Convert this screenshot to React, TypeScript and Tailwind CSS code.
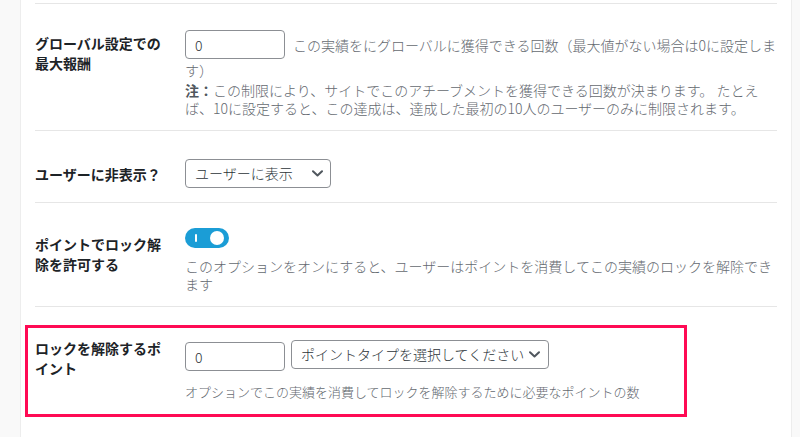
import { useState } from "react"

const Chevron = () => (
  <svg width="11" height="7" viewBox="0 0 11 7" fill="none" className="shrink-0">
    <path d="M1 1.2 5.5 5.5 10 1.2" stroke="#50575e" strokeWidth="2" strokeLinecap="round" strokeLinejoin="round" />
  </svg>
)

function FakeSelect({ label, className }: { label: string; className: string }) {
  return (
    <div
      className={`h-[29px] flex items-center justify-between rounded-[4px] border border-[#8c8f94] bg-white text-[14px] font-light text-[#2c3338] ${className}`}
    >
      <span className="whitespace-nowrap">{label}</span>
      <Chevron />
    </div>
  )
}

function NumberInput({ className = "" }: { className?: string }) {
  return (
    <input
      defaultValue="0"
      className={`h-[29px] w-[100px] rounded-[4px] border border-[#8c8f94] bg-white pl-[9px] text-[14px] font-light text-[#2c3338] outline-none ${className}`}
    />
  )
}

export default function App() {
  const [unlock, setUnlock] = useState(true)

  return (
    <div className="min-h-[437px] h-[437px] overflow-hidden bg-[#f9f9f9] font-['Noto_Sans_CJK_JP','Noto_Sans',sans-serif]">
      <div className="ml-[20px] w-[772px] h-full bg-white border-x border-[#ededed] px-[14px]">
        <div className="h-[3px]" />

        {/* 最大報酬 */}
        <div className="flex border-t border-[#e6e6e6] pt-[26px] pb-[13px]">
          <div className="w-[150px] shrink-0 pt-[3px] pr-[14px] text-[14px] leading-[20px] font-bold text-[#1d2327]">
            グローバル設定での最大報酬
          </div>
          <div className="w-[594px] text-[14px] leading-[18px] font-light text-[#646970]">
            <div>
              <NumberInput className="align-middle mr-[8px]" />
              <span className="align-middle">この実績をにグローバルに獲得できる回数（最大値がない場合は0に設定します）</span>
            </div>
            <p className="mt-[2px]">
              <b className="font-bold text-[#50575e]">注：</b>この制限により、サイトでこのアチーブメントを獲得できる回数が決まります。 たとえば、10に設定すると、この達成は、達成した最初の10人のユーザーのみに制限されます。
            </p>
          </div>
        </div>

        {/* 非表示 */}
        <div className="flex border-t border-[#e6e6e6] pt-[28px] pb-[14px]">
          <div className="w-[150px] shrink-0 pt-[5px] pr-[14px] text-[14px] leading-[20px] font-bold text-[#1d2327]">
            ユーザーに非表示？
          </div>
          <FakeSelect label="ユーザーに表示" className="w-[146px] pl-[9px] pr-[7px]" />
        </div>

        {/* ポイントでロック解除 */}
        <div className="flex border-t border-[#e6e6e6] pt-[25px] pb-[13px]">
          <div className="w-[150px] shrink-0 pt-[6px] pr-[14px] text-[14px] leading-[20px] font-bold text-[#1d2327]">
            ポイントでロック解除を許可する
          </div>
          <div className="w-[594px]">
            <button
              onClick={() => setUnlock(!unlock)}
              className={`relative flex h-[20px] w-[44px] items-center rounded-full ${unlock ? "bg-[#1b9dd6]" : "bg-[#c3c4c7]"}`}
            >
              <span className="absolute left-[10px] top-[6px] h-[8px] w-[2px] rounded-sm bg-white" />
              <span className={`absolute top-[3px] h-[14px] w-[14px] rounded-full bg-white ${unlock ? "right-[5px]" : "left-[4px]"}`} />
            </button>
            <p className="mt-[9px] text-[14px] leading-[18px] font-light text-[#646970]">
              このオプションをオンにすると、ユーザーはポイントを消費してこの実績のロックを解除できます
            </p>
          </div>
        </div>

        {/* ロックを解除するポイント */}
        <div className="border-t border-[#e6e6e6] pt-[18px]">
          <div className="-ml-[10px] w-[662px] border-[3px] border-[#ff0a54] pl-[7px] pt-[9px] pb-[13px] flex">
            <div className="w-[150px] shrink-0 pt-[1px] pr-[14px] text-[14px] leading-[20px] font-bold text-[#1d2327]">
              ロックを解除するポイント
            </div>
            <div className="pt-[3px]">
              <div className="flex items-start gap-[6px]">
                <NumberInput className="mt-[2px]" />
                <FakeSelect label="ポイントタイプを選択してください" className="w-[258px] pl-[9px] pr-[8px]" />
              </div>
              <p className="mt-[12px] text-[13px] leading-[18px] font-light text-[#646970]">
                オプションでこの実績を消費してロックを解除するために必要なポイントの数
              </p>
            </div>
          </div>
        </div>
      </div>
    </div>
  )
}
